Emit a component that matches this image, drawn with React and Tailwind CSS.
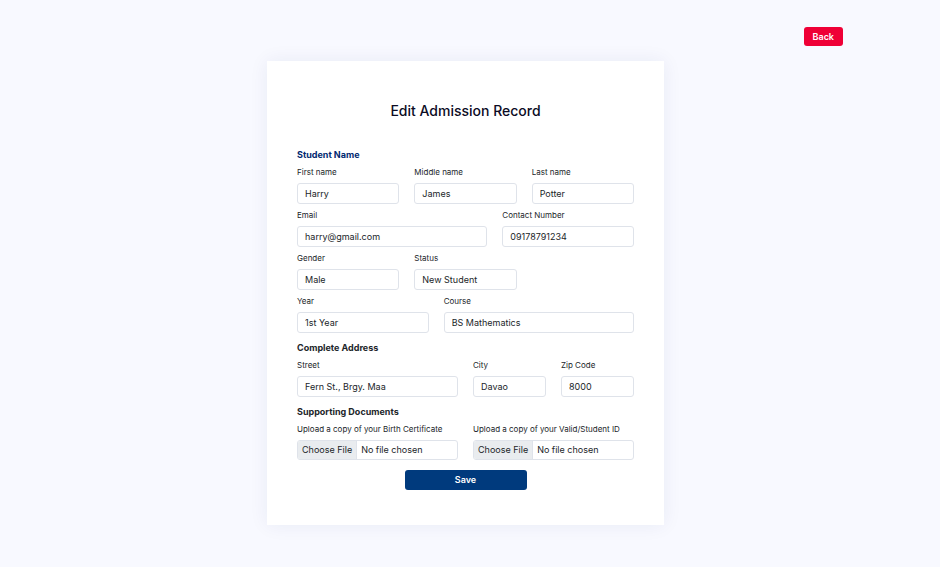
import React from "react";

const controlClass =
  "w-full min-w-0 rounded-[3px] border border-[#dfe3ea] bg-white text-[9px] leading-[14px] text-[#212529] outline-none focus:border-[#86b7fe]";

function Field({ id, label, value, type = "text", span }) {
  return (
    <div className={`flex flex-col gap-1 ${span}`}>
      <label htmlFor={id} className="whitespace-nowrap text-[8px] leading-[14px] text-[#212529]">
        {label}
      </label>
      <input id={id} name={id} type={type} defaultValue={value} className={`${controlClass} h-[21px] px-[7px]`} />
    </div>
  );
}

function FileField({ id, label }) {
  return (
    <div className="col-span-6 flex flex-col gap-1">
      <label htmlFor={id} className="whitespace-nowrap text-[8px] leading-[14px] text-[#212529]">
        {label}
      </label>
      <input
        id={id}
        name={id}
        type="file"
        className={`${controlClass} h-5 overflow-hidden file:mr-1 file:h-[18px] file:border-0 file:border-r file:border-solid file:border-[#dfe3ea] file:bg-[#e9ecef] file:px-1 file:text-[9px] file:text-[#212529]`}
      />
    </div>
  );
}

function Section({ title, titleColor, children }) {
  return (
    <section className="flex flex-col gap-[3px]">
      <h2 className={`text-[9px] font-bold leading-[14px] ${titleColor}`}>{title}</h2>
      <div className="grid grid-cols-12 gap-x-[15px] gap-y-1">{children}</div>
    </section>
  );
}

export default function App() {
  return (
    <div className="min-h-screen bg-[#f8f9ff] pr-[9px] font-['Inter','Liberation_Sans',sans-serif]">
      <main className="mx-auto flex max-w-[755px] flex-col pt-[27px] pb-[42px]">
        <button
          type="button"
          className="mb-[15px] h-[19px] self-end rounded-[3px] bg-[#ef0036] px-[9px] text-[9px] font-semibold leading-[14px] text-white"
        >
          Back
        </button>
        <form
          className="mx-auto w-full max-w-[397px] bg-white px-[30px] pt-[38px] pb-[35px] shadow-[0_0_18px_rgba(1,41,112,0.07)]"
          onSubmit={(e) => e.preventDefault()}
        >
          <h1 className="mb-[25px] text-center text-[14px] font-medium leading-6 text-[#0b0b24]">
            Edit Admission Record
          </h1>
          <div className="flex flex-col gap-2">
            <Section title="Student Name" titleColor="text-[#012970]">
              <Field id="firstName" label="First name" value="Harry" span="col-span-4" />
              <Field id="middleName" label="Middle name" value="James" span="col-span-4" />
              <Field id="lastName" label="Last name" value="Potter" span="col-span-4" />
              <Field id="email" label="Email" type="email" value="harry@gmail.com" span="col-span-7" />
              <Field id="contact" label="Contact Number" type="tel" value="09178791234" span="col-span-5" />
              <Field id="gender" label="Gender" value="Male" span="col-span-4" />
              <Field id="status" label="Status" value="New Student" span="col-span-4" />
              <Field id="year" label="Year" value="1st Year" span="col-span-5 col-start-1" />
              <Field id="course" label="Course" value="BS Mathematics" span="col-span-7" />
            </Section>
            <Section title="Complete Address" titleColor="text-[#212529]">
              <Field id="street" label="Street" value="Fern St., Brgy. Maa" span="col-span-6" />
              <Field id="city" label="City" value="Davao" span="col-span-3" />
              <Field id="zip" label="Zip Code" value="8000" span="col-span-3" />
            </Section>
            <Section title="Supporting Documents" titleColor="text-[#212529]">
              <FileField id="birthCertificate" label="Upload a copy of your Birth Certificate" />
              <FileField id="studentId" label="Upload a copy of your Valid/Student ID" />
            </Section>
          </div>
          <button
            type="submit"
            className="mx-auto mt-[10px] block h-5 w-[122px] rounded-[3px] bg-[#003a7d] text-[9px] font-semibold leading-[14px] text-white"
          >
            Save
          </button>
        </form>
      </main>
    </div>
  );
}
